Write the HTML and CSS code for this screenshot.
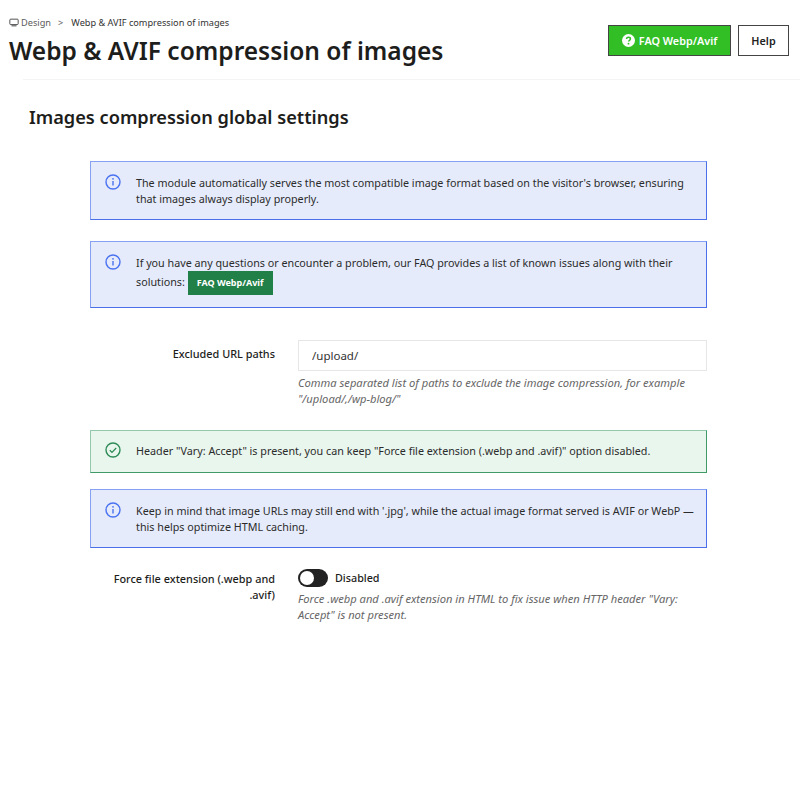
FILE: index.html
```html
<!DOCTYPE html>
<html lang="en">
<head>
    <meta charset="UTF-8">
    <title>Webp & AVIF compression of images</title>
    <link rel="stylesheet" href="styles.css">
</head>
<body>
    <header class="page-head">
        <div class="head-left">
            <div class="breadcrumb">
                <svg class="crumb-icon" viewBox="0 0 12 10" width="10" height="9"><rect x="1" y="1" width="10" height="6.5" rx="1" fill="none" stroke="#444" stroke-width="1.1"/><path d="M3 9h6" stroke="#444" stroke-width="1.2"/></svg>
                <span class="crumb-parent">Design</span>
                <span class="crumb-sep">&gt;</span>
                <span class="crumb-current">Webp &amp; AVIF compression of images</span>
            </div>
            <h1>Webp &amp; AVIF compression of images</h1>
        </div>
        <div class="head-actions">
            <a class="btn btn-green" href="#">
                <svg viewBox="0 0 14 14" width="13" height="13"><circle cx="7" cy="7" r="7" fill="#fff"/><path d="M4.9 5.4c0-1.2 1-1.9 2.1-1.9s2.1.7 2.1 1.8c0 1.5-2 1.5-2 2.9" fill="none" stroke="#32bf26" stroke-width="1.6"/><circle cx="7" cy="10.4" r="1" fill="#32bf26"/></svg>
                FAQ Webp/Avif
            </a>
            <a class="btn btn-plain" href="#">Help</a>
        </div>
    </header>

    <main class="panel">
        <h2>Images compression global settings</h2>

        <div class="alert alert-info alert-first">
            <svg class="alert-icon" viewBox="0 0 16 16" width="16" height="16"><circle cx="8" cy="8" r="7" fill="none" stroke="#4a72f0" stroke-width="1.4"/><path d="M8 7v4.5" stroke="#4a72f0" stroke-width="1.4"/><circle cx="8" cy="4.8" r=".9" fill="#4a72f0"/></svg>
            <p>The module automatically serves the most compatible image format based on the visitor's browser, ensuring that images always display properly.</p>
        </div>

        <div class="alert alert-info alert-second">
            <svg class="alert-icon" viewBox="0 0 16 16" width="16" height="16"><circle cx="8" cy="8" r="7" fill="none" stroke="#4a72f0" stroke-width="1.4"/><path d="M8 7v4.5" stroke="#4a72f0" stroke-width="1.4"/><circle cx="8" cy="4.8" r=".9" fill="#4a72f0"/></svg>
            <p>If you have any questions or encounter a problem, our FAQ provides a list of known issues along with their solutions: <a class="faq-tag" href="#">FAQ Webp/Avif</a></p>
        </div>

        <div class="form-row row-paths">
            <label class="row-label" for="paths">Excluded URL paths</label>
            <div class="row-field">
                <input type="text" id="paths" value="/upload/">
                <p class="hint hint-input">Comma separated list of paths to exclude the image compression, for example "/upload/,/wp-blog/"</p>
            </div>
        </div>

        <div class="alert alert-success alert-vary">
            <svg class="alert-icon" viewBox="0 0 16 16" width="16" height="16"><circle cx="8" cy="8" r="7" fill="none" stroke="#2e8b57" stroke-width="1.4"/><path d="M4.8 8.2l2.2 2.2 4.2-4.4" fill="none" stroke="#2e8b57" stroke-width="1.3"/></svg>
            <p>Header "Vary: Accept" is present, you can keep "Force file extension (.webp and .avif)" option disabled.</p>
        </div>

        <div class="alert alert-info alert-keep">
            <svg class="alert-icon" viewBox="0 0 16 16" width="16" height="16"><circle cx="8" cy="8" r="7" fill="none" stroke="#4a72f0" stroke-width="1.4"/><path d="M8 7v4.5" stroke="#4a72f0" stroke-width="1.4"/><circle cx="8" cy="4.8" r=".9" fill="#4a72f0"/></svg>
            <p>Keep in mind that image URLs may still end with '.jpg', while the actual image format served is AVIF or WebP — this helps optimize HTML caching.</p>
        </div>

        <div class="form-row row-force">
            <div class="row-label">Force file extension (.webp and .avif)</div>
            <div class="row-field">
                <div class="switch-line">
                    <span class="switch"><span class="knob"></span></span>
                    <span class="switch-text">Disabled</span>
                </div>
                <p class="hint hint-switch">Force .webp and .avif extension in HTML to fix issue when HTTP header "Vary: Accept" is not present.</p>
            </div>
        </div>
    </main>
</body>
</html>
```

FILE: styles.css
```css
* {
    margin: 0;
    padding: 0;
    box-sizing: border-box;
    font-family: 'Noto Sans', 'Open Sans', sans-serif;
}

body {
    background-color: #fff;
    color: #1d1d1b;
    font-size: 10.75px;
}

.page-head {
    display: flex;
    justify-content: space-between;
    padding: 16px 11px 0 9px;
    height: 80px;
    position: relative;
}

.page-head::after {
    content: "";
    position: absolute;
    left: 23px;
    right: 0;
    bottom: 0;
    height: 1px;
    background: #f4f4f4;
}

.breadcrumb {
    display: flex;
    align-items: center;
    font-size: 9.2px;
    color: #5c5c5c;
    height: 12px;
}

.crumb-icon {
    margin-right: 2px;
}

.crumb-sep {
    margin: 0 8px 0 7px;
}

.crumb-current {
    color: #333;
}

h1 {
    font-size: 24.5px;
    font-weight: 600;
    line-height: 34px;
    margin-top: 6px;
}

.head-actions {
    display: flex;
    gap: 7px;
    padding-top: 9px;
}

.btn {
    display: flex;
    align-items: center;
    justify-content: center;
    height: 31px;
    font-size: 10.8px;
    font-weight: 600;
    text-decoration: none;
    border: 1px solid #444;
}

.btn-green {
    width: 123px;
    gap: 4px;
    background: #32bf26;
    color: #fff;
}

.btn-plain {
    width: 51px;
    background: #fff;
    color: #222;
}

.panel {
    padding: 0 93px 0 29px;
}

h2 {
    font-size: 18.2px;
    font-weight: 600;
    line-height: 26px;
    margin-top: 24px;
}

.alert {
    display: flex;
    margin-left: 61px;
    padding: 13px 10px 0 14px;
    border: 1px solid;
    border-color: #86a0f2 #4a6fe8 #4a6fe8 #86a0f2;
    line-height: 16px;
    color: #2b2b2b;
}

.alert p {
    margin-left: 15px;
    flex: 1;
}

.alert-icon {
    flex-shrink: 0;
    margin-top: -1px;
}

.alert-info {
    background: #e6ebfb;
}

.alert-success {
    background: #e9f6ee;
    border-color: #93c9aa #3f9a68 #3f9a68 #93c9aa;
}

.alert-first {
    margin-top: 31px;
    height: 59px;
}

.alert-second {
    margin-top: 21px;
    height: 67px;
}

.alert-vary {
    margin-top: 23px;
    height: 43px;
    padding-top: 12px;
}

.alert-keep {
    margin-top: 16px;
    height: 59px;
}

.faq-tag {
    display: inline-block;
    padding: 0 9px;
    line-height: 24px;
    background: #218048;
    color: #fff;
    font-size: 9px;
    font-weight: 700;
    text-decoration: none;
    vertical-align: middle;
}

.form-row {
    display: grid;
    grid-template-columns: 185px 409px;
    column-gap: 23px;
    margin-left: 61px;
}

.row-paths {
    margin-top: 32px;
}

.row-force {
    margin-top: 21px;
}

.row-label {
    text-align: right;
    font-size: 10.9px;
    font-weight: 500;
    line-height: 16px;
    padding-top: 6px;
}

.row-force .row-label {
    padding-top: 2px;
}

input[type="text"] {
    display: block;
    width: 100%;
    height: 31px;
    padding: 0 13px;
    border: 1px solid #e6e6e6;
    background: #fff;
    font-size: 11.5px;
    color: #333;
}

.hint {
    font-style: italic;
    font-size: 11.15px;
    line-height: 16px;
    color: #666;
}

.hint-input {
    margin-top: 4px;
}

.hint-switch {
    margin-top: 4px;
}

.switch-line {
    display: flex;
    align-items: center;
    gap: 7px;
    height: 18px;
}

.switch {
    display: flex;
    align-items: center;
    width: 30px;
    height: 18px;
    padding: 2px;
    border-radius: 9px;
    background: #222;
}

.knob {
    width: 14px;
    height: 14px;
    border-radius: 50%;
    background: #fff;
}

.switch-text {
    font-weight: 500;
}
```
